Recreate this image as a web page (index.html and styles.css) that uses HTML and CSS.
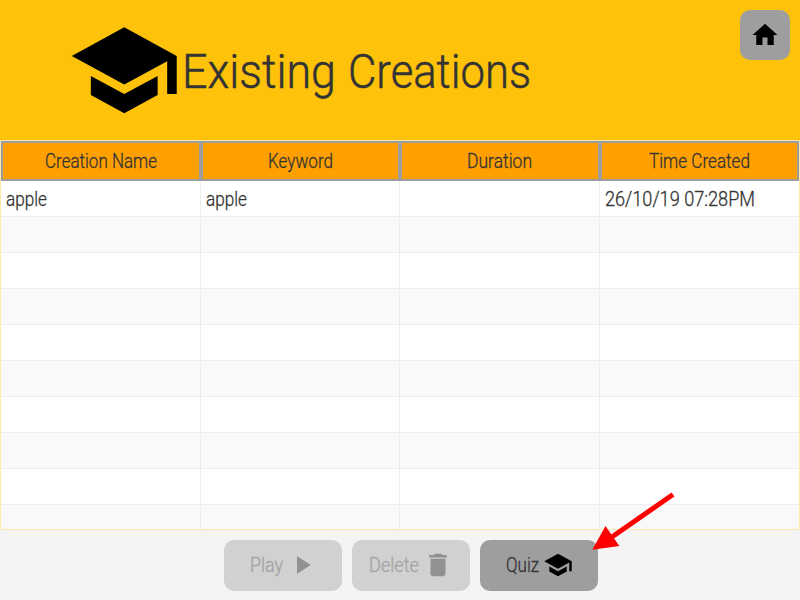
FILE: index.html
```html
<!DOCTYPE html>
<html lang="en">
<head>
<meta charset="utf-8">
<title>Existing Creations</title>
<link rel="stylesheet" href="styles.css">
</head>
<body>
<header class="banner">
  <svg class="logo" viewBox="0 0 24 24"><path d="M5 13.18v4L12 21l7-3.82v-4L12 17l-7-3.82zM12 3L1 9l11 6 9-4.91V17h2V9L12 3z"/></svg>
  <svg class="title" width="350" height="64"><text x="-1" y="48" textLength="154" lengthAdjust="spacingAndGlyphs">Existing</text><text x="165" y="48" textLength="183" lengthAdjust="spacingAndGlyphs">Creations</text></svg>
  <button class="home" aria-label="Home"><svg class="icon" viewBox="0 0 24 24"><path d="M10 20v-6h4v6h5v-8h3L12 3 2 12h3v8z"/></svg></button>
</header>
<main class="table">
  <div class="row head">
    <div class="cell"><svg class="label" width="112" height="24"><text y="19" textLength="112" lengthAdjust="spacingAndGlyphs">Creation Name</text></svg></div>
    <div class="cell"><svg class="label" width="65" height="24"><text y="19" textLength="65" lengthAdjust="spacingAndGlyphs">Keyword</text></svg></div>
    <div class="cell"><svg class="label" width="65" height="24"><text y="19" textLength="65" lengthAdjust="spacingAndGlyphs">Duration</text></svg></div>
    <div class="cell"><svg class="label" width="101" height="24"><text y="19" textLength="101" lengthAdjust="spacingAndGlyphs">Time Created</text></svg></div>
  </div>
  <div class="row">
    <div class="cell"><svg class="label" width="42" height="24"><text y="19" textLength="41" lengthAdjust="spacingAndGlyphs">apple</text></svg></div>
    <div class="cell"><svg class="label" width="42" height="24"><text y="19" textLength="41" lengthAdjust="spacingAndGlyphs">apple</text></svg></div>
    <div class="cell"></div>
    <div class="cell"><svg class="label" width="152" height="24"><text y="19" textLength="150" lengthAdjust="spacingAndGlyphs">26/10/19 07:28PM</text></svg></div>
  </div>
  <div class="row"><div class="cell"></div><div class="cell"></div><div class="cell"></div><div class="cell"></div></div>
  <div class="row"><div class="cell"></div><div class="cell"></div><div class="cell"></div><div class="cell"></div></div>
  <div class="row"><div class="cell"></div><div class="cell"></div><div class="cell"></div><div class="cell"></div></div>
  <div class="row"><div class="cell"></div><div class="cell"></div><div class="cell"></div><div class="cell"></div></div>
  <div class="row"><div class="cell"></div><div class="cell"></div><div class="cell"></div><div class="cell"></div></div>
  <div class="row"><div class="cell"></div><div class="cell"></div><div class="cell"></div><div class="cell"></div></div>
  <div class="row"><div class="cell"></div><div class="cell"></div><div class="cell"></div><div class="cell"></div></div>
  <div class="row"><div class="cell"></div><div class="cell"></div><div class="cell"></div><div class="cell"></div></div>
  <div class="row"><div class="cell"></div><div class="cell"></div><div class="cell"></div><div class="cell"></div></div>
</main>
<footer class="actions">
  <button class="action" disabled><svg class="label" width="33" height="24"><text y="19" textLength="33" lengthAdjust="spacingAndGlyphs">Play</text></svg><svg class="icon" viewBox="0 0 24 24"><path d="M8 5v14l11-7z"/></svg></button>
  <button class="action" disabled><svg class="label" width="50" height="24"><text y="19" textLength="50" lengthAdjust="spacingAndGlyphs">Delete</text></svg><svg class="icon" viewBox="0 0 24 24"><path d="M6 19c0 1.1.9 2 2 2h8c1.1 0 2-.9 2-2V7H6v12zM19 4h-3.5l-1-1h-5l-1 1H5v2h14V4z"/></svg></button>
  <button class="action"><svg class="label" width="33" height="24"><text y="19" textLength="33" lengthAdjust="spacingAndGlyphs">Quiz</text></svg><svg class="icon" viewBox="0 0 24 24"><path d="M5 13.18v4L12 21l7-3.82v-4L12 17l-7-3.82zM12 3L1 9l11 6 9-4.91V17h2V9L12 3z"/></svg></button>
</footer>
<svg class="pointer" viewBox="590 490 90 65"><path class="shaft" d="M673 494.5L609 539"/><path class="tip" d="M592.3 549.7L605.5 526L619.3 546z"/></svg>
</body>
</html>
```
FILE: styles.css
```css
* { box-sizing: border-box; }
body {
  margin: 0;
  width: 800px;
  height: 600px;
  overflow: hidden;
  position: relative;
  display: flex;
  flex-direction: column;
  background: #f4f4f4;
  font-family: Roboto, "Liberation Sans", sans-serif;
  font-weight: 300;
}
svg { display: block; flex: none; }
button { border: 0; padding: 0; font: inherit; }

.banner {
  flex: none;
  height: 140px;
  display: flex;
  align-items: flex-start;
  padding: 10px 10px 0 67.4px;
  background: #ffc20a;
}
.logo { width: 114.5px; height: 114.5px; margin-top: 3px; }
.title { margin: 30px 0 0 1px; font-size: 49px; fill: #333; stroke: #333; stroke-width: 0.5; overflow: visible; }
.home {
  width: 50px;
  height: 50px;
  margin-left: auto;
  display: flex;
  align-items: center;
  justify-content: center;
  border-radius: 10px;
  background: #9e9e9e;
}
.icon { width: 30px; height: 30px; }

.table {
  flex: none;
  height: 390px;
  border: 1px solid #ffe8a8;
  background: #fff;
  overflow: hidden;
}
.row {
  display: grid;
  grid-template-columns: repeat(4, 1fr);
  height: 36px;
  border-bottom: 1px solid #ededed;
}
.row:nth-child(odd) { background: #f9f9f9; }
.cell {
  display: flex;
  align-items: center;
  padding-left: 5px;
  border-right: 1px solid #ededed;
}
.cell:last-child { border-right: 0; }
.row.head { height: 40px; border: 0; background: #9e9e9e; }
.row.head .cell {
  justify-content: center;
  padding: 0;
  border: 2px solid #9e9e9e;
  background: #ffa000;
}
.label { font-size: 20px; fill: #333; stroke: #333; stroke-width: 0.3; overflow: visible; }

.actions {
  flex: none;
  height: 70px;
  display: flex;
  justify-content: center;
  gap: 10px;
  padding: 10px 0 0 22px;
}
.action {
  width: 118px;
  height: 51px;
  display: flex;
  align-items: center;
  justify-content: center;
  gap: 4px;
  padding-bottom: 1px;
  border-radius: 10px;
  background: #9e9e9e;
}
.action:disabled { background: #d1d1d1; }
.action:disabled .label { fill: #a3a3a3; stroke: #a3a3a3; }
.action:disabled .icon { fill: #919191; }

.pointer { position: absolute; left: 590px; top: 490px; width: 90px; height: 65px; }
.shaft { stroke: #f00; stroke-width: 5; }
.tip { fill: #f00; }
```
